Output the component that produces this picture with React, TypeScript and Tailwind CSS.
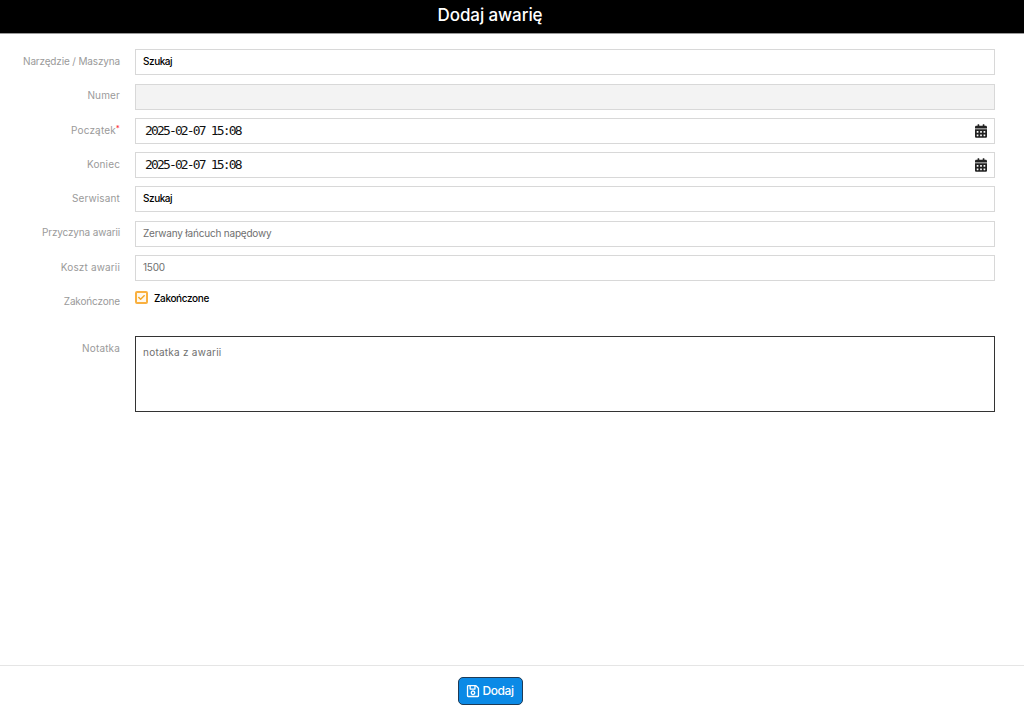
import React from 'react';
import { FaCalendarAlt, FaRegSave, FaCheck } from 'react-icons/fa';

const font = "font-['Inter','Liberation_Sans',sans-serif]";

const Row: React.FC<{ label: string; required?: boolean; tight?: boolean; children: React.ReactNode }> = ({ label, required, tight, children }) => (
  <div className="flex mb-[8.25px]">
    <div
      className={`w-[120px] shrink-0 pt-[4.8px] text-right text-[10px] leading-[14px] text-[#9a9a9a] ${
        tight ? 'tracking-[-0.15px]' : 'tracking-[0.15px]'
      }`}
    >
      {label}
      {required && <span className="relative -top-[3px] text-[8px] leading-none text-red-500">*</span>}
    </div>
    <div className="ml-[15px] w-[859.5px]">{children}</div>
  </div>
);

const Field: React.FC<{ value?: string; dark?: boolean; disabled?: boolean }> = ({ value, dark, disabled }) => (
  <div
    className={`h-[26px] border border-[#d8d8d8] px-[7px] text-[10px] leading-[23.4px] ${
      disabled ? 'bg-[#f3f3f3]' : 'bg-white'
    } ${dark ? 'font-medium tracking-[-0.45px] text-black' : 'tracking-[-0.2px] text-[#6f6f6f]'}`}
  >
    {value}
  </div>
);

const DateField: React.FC<{ value: string }> = ({ value }) => (
  <div className="flex h-[26px] items-center justify-between border border-[#d8d8d8] bg-white pl-[9px] pr-[7px]">
    <span className="font-['DejaVu_Sans_Mono',monospace] text-[13px] tracking-[-1.85px] text-[#111]">{value}</span>
    <FaCalendarAlt className="h-[14px] w-[12px] text-[#222]" />
  </div>
);

export default function App() {
  return (
    <div className={`flex h-[712px] flex-col bg-white ${font}`}>
      <header className="h-[34px] shrink-0 border-b border-[#9a9a9a] bg-black pr-[44px] text-center text-[17px] font-medium leading-[30px] tracking-[-0.08px] text-white">
        Dodaj awarię
      </header>

      <main className="flex-1 pt-[15.3px]">
        <Row label="Narzędzie / Maszyna" tight>
          <Field value="Szukaj" dark />
        </Row>
        <Row label="Numer">
          <Field disabled />
        </Row>
        <Row label="Początek" required>
          <DateField value="2025-02-07 15:08" />
        </Row>
        <Row label="Koniec">
          <DateField value="2025-02-07 15:08" />
        </Row>
        <Row label="Serwisant">
          <Field value="Szukaj" dark />
        </Row>
        <Row label="Przyczyna awarii" tight>
          <Field value="Zerwany łańcuch napędowy" />
        </Row>
        <Row label="Koszt awarii">
          <Field value="1500" />
        </Row>
        <Row label="Zakończone" tight>
          <div className="flex h-[39px] items-start pt-[2px]">
            <span className="flex h-[13px] w-[13px] items-center justify-center rounded-[2px] border-2 border-[#f9b03f] bg-[#fff8ec]">
              <FaCheck className="h-[7px] w-[7px] text-[#f5a623]" />
            </span>
            <span className="ml-[6px] text-[10px] font-medium leading-[14px] tracking-[-0.35px] text-black">Zakończone</span>
          </div>
        </Row>
        <Row label="Notatka">
          <div className="h-[76px] border border-[#333] bg-white px-[7px] py-[9px] text-[10px] leading-[12px] tracking-[0.25px] text-[#6f6f6f]">
            notatka z awarii
          </div>
        </Row>
      </main>

      <footer className="flex h-[47px] shrink-0 items-start justify-center border-t border-[#e5e5e5] pr-[44px] pt-[11px]">
        <button className="flex h-[28px] w-[65px] items-center justify-center gap-[2px] rounded-[5px] border border-[#1f3a55] bg-[#0b8ae6] text-[12px] font-medium tracking-[-0.4px] text-white">
          <FaRegSave className="h-[14px] w-[14px]" />
          Dodaj
        </button>
      </footer>
    </div>
  );
}
